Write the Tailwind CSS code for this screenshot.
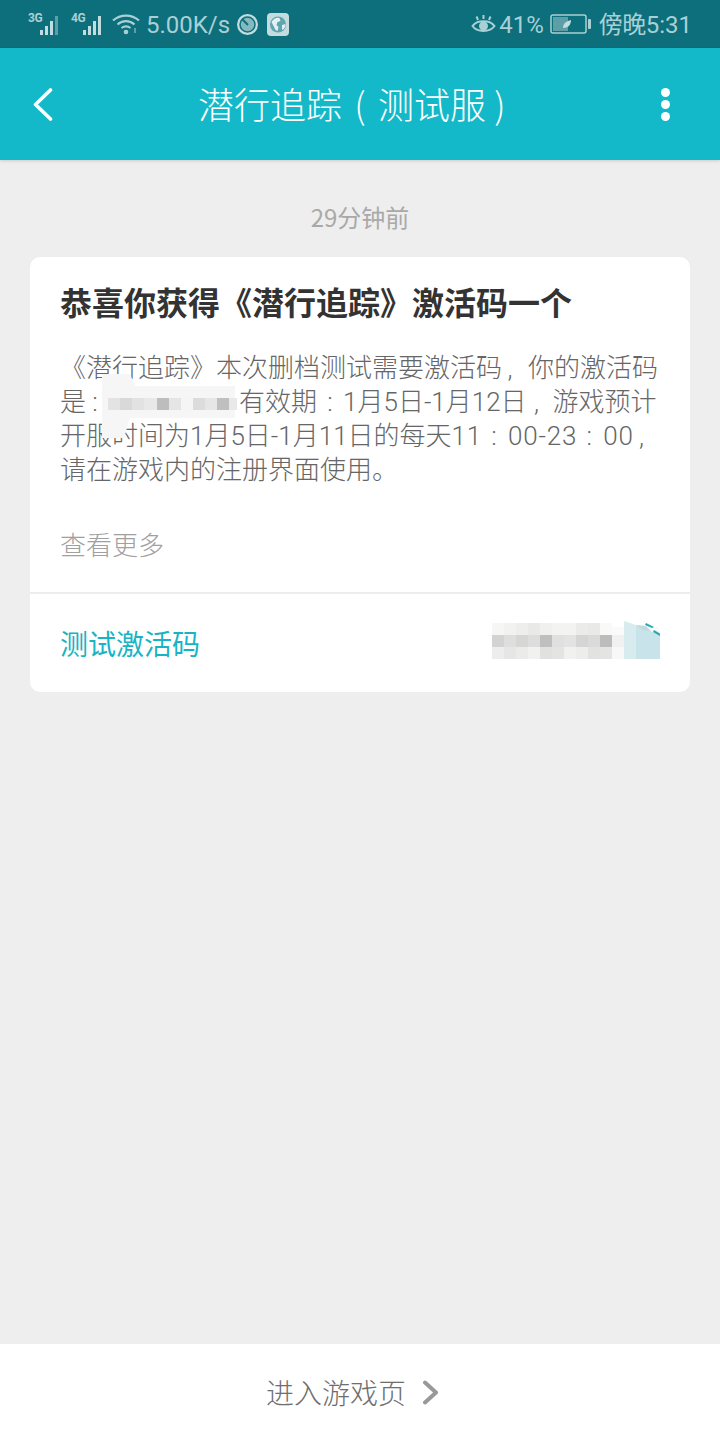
<!DOCTYPE html>
<html lang="zh">
<head>
<meta charset="utf-8">
<script src="https://cdn.jsdelivr.net/npm/@tailwindcss/browser@4"></script>
</head>
<body class="m-0">
<div class="w-[720px] h-[1440px] flex flex-col bg-[#eeeeee] overflow-hidden font-['Noto_Sans_CJK_SC','Noto_Sans',sans-serif]">
  <!-- status bar -->
  <div class="h-12 bg-[#0d6f7b] flex items-center justify-between pl-7 pr-[28px] text-[#a9d0d5] shrink-0">
    <div class="flex items-center">
      <div class="flex items-start h-6 w-[36px] relative">
        <span class="text-[12px] leading-[12px] font-bold font-['Roboto',sans-serif] tracking-[-0.5px]">3G</span>
        <svg class="absolute left-[11px] top-[2px]" width="24" height="22" viewBox="0 0 24 22"><g fill="#c2dde0"><rect x="1" y="16" width="3" height="5"/><rect x="6" y="12" width="3" height="9"/><rect x="11" y="7" width="3" height="14"/><rect x="16" y="2" width="3" height="19" fill="#5d9ea7"/></g></svg>
      </div>
      <div class="flex items-start h-6 w-[36px] relative ml-[7px]">
        <span class="text-[12px] leading-[12px] font-bold font-['Roboto',sans-serif] tracking-[-0.5px]">4G</span>
        <svg class="absolute left-[11px] top-[2px]" width="24" height="22" viewBox="0 0 24 22"><g fill="#c2dde0"><rect x="1" y="16" width="3" height="5"/><rect x="6" y="12" width="3" height="9"/><rect x="11" y="7" width="3" height="14"/><rect x="16" y="2" width="3" height="19"/></g></svg>
      </div>
      <svg class="ml-[5px]" width="28" height="22" viewBox="0 0 28 22" fill="none" stroke="#a9d0d5" stroke-width="2.2"><path d="M1 7.500C8.500 1 19.500 1 27 7.500"/><path d="M5.500 11.500C10.500 7 17.500 7 22.500 11.500"/><path d="M9.500 15C12.500 12.700 15.500 12.700 18.500 15"/><circle cx="14" cy="19" r="2.300" fill="#a9d0d5" stroke="none"/><path d="M23 15v5" stroke="#5d9ea7" stroke-width="2"/></svg>
      <span class="ml-[6px] text-[24px] leading-none font-['Roboto',sans-serif] pt-[2px]">5.00K/s</span>
      <svg class="ml-[6px]" width="23" height="23" viewBox="0 0 23 23" fill="none"><circle cx="11.500" cy="11.500" r="10.500" fill="#c4dcdf"/><circle cx="11.500" cy="11.500" r="7.500" fill="#86b8bf" stroke="#0d6f7b" stroke-width="1.500"/><path d="M6 6l6 6" stroke="#0d6f7b" stroke-width="2"/></svg>
      <svg class="ml-[8px]" width="22" height="23" viewBox="0 0 22 23"><rect width="22" height="23" rx="4" fill="#c4dcdf"/><circle cx="11" cy="11.500" r="8" fill="#5fa5af"/><path d="M4.500 9c2-4 6-5 8-4l1 3-3 1-1 3 2 2-1 4c-3-1-3-4-4-5z" fill="#e4f0f1"/><path d="M15 12l3.500-1c0 3-1 5-3.500 6z" fill="#e4f0f1"/></svg>
    </div>
    <div class="flex items-center">
      <svg width="25" height="23" viewBox="0 0 25 23" fill="none" stroke="#a9d0d5" stroke-width="2"><path d="M1.500 13C6 6.500 19 6.500 23.500 13C19 19.500 6 19.500 1.500 13Z"/><circle cx="12.500" cy="13" r="4.500" fill="#a9d0d5" stroke="none"/><path d="M12.500 2v4M5.500 3.500l1.500 3.500M19.500 3.500l-1.500 3.500"/></svg>
      <span class="ml-[3px] text-[24px] leading-none font-['Roboto',sans-serif] pt-[2px]">41%</span>
      <svg class="ml-[6px]" width="41" height="20" viewBox="0 0 41 20" fill="none"><rect x="1" y="1" width="35" height="18" rx="2" stroke="#a9d0d5" stroke-width="1.500"/><rect x="3" y="3" width="15" height="14" fill="#5d9ea7"/><path d="M13 14c0-5 4-7 8-8 0 5-3 8-8 8z" fill="#c4dcdf"/><rect x="38" y="5" width="3" height="10" rx="1" fill="#a9d0d5"/></svg>
      <span class="ml-[8px] text-[24px] leading-none tracking-[-0.5px]">傍晚<span class="font-['Roboto',sans-serif] tracking-normal">5:31</span></span>
    </div>
  </div>
  <!-- app bar -->
  <div class="h-28 bg-[#14b9c9] flex items-center justify-between relative shrink-0 shadow-[0_1px_3px_rgba(0,0,0,0.15)]">
    <svg class="ml-[33px]" width="20" height="33" viewBox="0 0 20 33" fill="none" stroke="#ffffff" stroke-width="3.600" stroke-linecap="round" stroke-linejoin="round"><path d="M17.500 2L2.500 16.500L17.500 31"/></svg>
    <div class="absolute inset-x-0 top-0 h-full pb-[2px] flex items-center justify-center text-white text-[36px] leading-none font-light">潜行追踪<span class="w-[36px] text-center">(</span>测试服<span class="w-[36px] text-center pr-[8px]">)</span></div>
    <div class="mr-[50px] flex flex-col gap-[3px]">
      <div class="w-[9px] h-[9px] rounded-full bg-white"></div>
      <div class="w-[9px] h-[9px] rounded-full bg-white"></div>
      <div class="w-[9px] h-[9px] rounded-full bg-white"></div>
    </div>
  </div>
  <!-- content -->
  <div class="flex-1 flex flex-col px-[30px]">
    <div class="h-[97px] pt-[16px] flex items-center justify-center text-[24px] text-[#a9a9a9] leading-none">29分钟前</div>
    <div class="bg-white rounded-[10px] h-[435px] flex flex-col">
      <div class="flex-1 px-[30px] pt-[24px]">
        <h1 class="text-[32px] leading-[40px] font-bold text-[#333333] whitespace-nowrap">恭喜你获得《潜行追踪》激活码一个</h1>
        <div class="mt-[30px] text-[26px] text-[#666666] font-light font-['Roboto','Noto_Sans_CJK_SC',sans-serif] flex flex-col">
          <div class="h-[34px] leading-[34px] whitespace-nowrap">《潜行追踪》本次删档测试需要激活码<span class="inline-block w-[26px] text-center pr-[10px]">,</span>你的激活码</div>
          <div class="h-[34px] leading-[34px] whitespace-nowrap">是<span class="inline-block w-[26px] text-center pr-[8px]">:</span><span class="inline-block w-[127px] h-[20px] relative align-middle"><svg class="absolute left-[-12px] top-[-22px]" width="140" height="68" viewBox="0 0 140 68"><path d="M2 2h28l5 12h100v32H30l-6 20H2z" fill="#f6f6f6"/><g fill="#e3e3e3"><rect x="8" y="26" width="12" height="12"/><rect x="20" y="26" width="12" height="12" fill="#d9d9d9"/><rect x="32" y="26" width="12" height="12" fill="#e2e2e2"/><rect x="44" y="26" width="13" height="12" fill="#e8e8e8"/><rect x="57" y="26" width="12" height="12" fill="#bdbdbd"/><rect x="69" y="26" width="12" height="12" fill="#e5e5e5"/><rect x="81" y="26" width="12" height="12" fill="#f5f5f5"/><rect x="93" y="26" width="12" height="12" fill="#dcdcdc"/><rect x="105" y="26" width="12" height="12" fill="#e6e6e6"/><rect x="117" y="26" width="12" height="12" fill="#bfbfbf"/><rect x="129" y="26" width="8" height="12" fill="#e9e9e9"/></g></svg></span>有效期<span class="inline-block w-[26px] text-center">:</span>1月5日-1月12日<span class="inline-block w-[26px] text-center pr-[6px]">,</span>游戏预计</div>
          <div class="h-[34px] leading-[34px] whitespace-nowrap">开服时间为1月5日-1月11日的每天<span class="tracking-[0.8px]">11</span><span class="inline-block w-[26px] text-center pr-[2px]">:</span><span class="tracking-[0.8px]">00-23</span><span class="inline-block w-[26px] text-center pr-[2px]">:</span><span class="tracking-[0.8px]">00</span><span class="inline-block w-[26px] text-center pr-[10px]">,</span></div>
          <div class="h-[34px] leading-[34px] whitespace-nowrap">请在游戏内的注册界面使用。</div>
        </div>
        <div class="mt-[40px] text-[26px] leading-[34px] text-[#a0a0a0] font-light">查看更多</div>
      </div>
      <div class="h-[100px] border-t-2 border-[#ececec] flex items-center justify-between pl-[30px]">
        <span class="text-[28px] leading-none text-[#18b4c4]">测试激活码</span>
        <svg class="mr-[30px]" width="170" height="48" viewBox="0 0 170 48"><path d="M2 8h166v32H2z" fill="#fafafa"/><g><rect x="2" y="4" width="12" height="12" fill="#f6f6f4"/><rect x="14" y="4" width="12" height="12" fill="#f2f2f0"/><rect x="26" y="4" width="12" height="12" fill="#eeeeec"/><rect x="38" y="4" width="12" height="12" fill="#e9e9e7"/><rect x="50" y="4" width="12" height="12" fill="#f0f0ee"/><rect x="62" y="4" width="12" height="12" fill="#f3f3f1"/><rect x="74" y="4" width="12" height="12" fill="#f3f3f1"/><rect x="86" y="4" width="12" height="12" fill="#ebebe9"/><rect x="98" y="4" width="12" height="12" fill="#e9e9e7"/><rect x="110" y="4" width="12" height="12" fill="#f9f9f9"/><rect x="2" y="16" width="12" height="12" fill="#d3d3d3"/><rect x="14" y="16" width="12" height="12" fill="#dedede"/><rect x="26" y="16" width="12" height="12" fill="#d6d6d6"/><rect x="38" y="16" width="12" height="12" fill="#dddddd"/><rect x="50" y="16" width="12" height="12" fill="#bfbfbf"/><rect x="62" y="16" width="12" height="12" fill="#e0e0e0"/><rect x="74" y="16" width="12" height="12" fill="#e3e3e3"/><rect x="86" y="16" width="12" height="12" fill="#d5d5d5"/><rect x="98" y="16" width="12" height="12" fill="#dadada"/><rect x="110" y="16" width="12" height="12" fill="#bcbcbc"/><rect x="122" y="16" width="12" height="12" fill="#f1f1f1"/><rect x="2" y="28" width="12" height="12" fill="#ededeb"/><rect x="14" y="28" width="12" height="12" fill="#e6e6e6"/><rect x="26" y="28" width="12" height="12" fill="#ebebe9"/><rect x="38" y="28" width="12" height="12" fill="#f1f1ef"/><rect x="50" y="28" width="12" height="12" fill="#e1e1df"/><rect x="62" y="28" width="12" height="12" fill="#e4e4e2"/><rect x="74" y="28" width="12" height="12" fill="#f1f1ef"/><rect x="86" y="28" width="12" height="12" fill="#ededeb"/><rect x="98" y="28" width="12" height="12" fill="#e2e2e0"/><rect x="110" y="28" width="12" height="12" fill="#e4e4e2"/><rect x="122" y="28" width="12" height="12" fill="#f8f8f8"/><rect x="134" y="28" width="12" height="12" fill="#f1f6f6"/></g><path d="M134 2l12 4v34h-12z" fill="#d8ebef"/><path d="M146 6l24 10v24h-24z" fill="#c8e3e9"/><path d="M146 6l10 1 5 5-8-1z" fill="#bcdadf"/><path d="M156 4l8 4-2 1-7-3zM164 11l7 4-1 2-7-4z" fill="#2aa8b0"/></svg>
      </div>
    </div>
  </div>
  <!-- bottom -->
  <div class="h-24 bg-white flex items-center justify-center shrink-0 pr-[15px]">
    <span class="text-[28px] leading-none text-[#6e6e6e] font-light">进入游戏页</span>
    <svg class="ml-[16px]" width="17" height="25" viewBox="0 0 17 25" fill="none" stroke="#999999" stroke-width="4" stroke-linejoin="round" stroke-linecap="round"><path d="M3 2.500L14 12.500L3 22.500"/></svg>
  </div>
</div>
</body>
</html>
